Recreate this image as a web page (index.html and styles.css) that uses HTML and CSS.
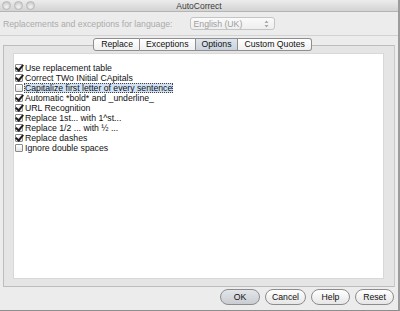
FILE: index.html
```html
<!DOCTYPE html>
<html>
<head>
  <meta charset="utf-8" />
  <title>AutoCorrect</title>
  <link rel="stylesheet" href="styles.css">
</head>
<body>

  <div class="window">
    <header class="titlebar">
      <div class="lights">
        <span class="light"></span>
        <span class="light"></span>
        <span class="light"></span>
      </div>
      <div class="title">AutoCorrect</div>
      <div></div>
    </header>

    <div class="lang">
      <span class="lang-label">Replacements and exceptions for language:</span>
      <div class="popup">
        <span>English (UK)</span>
        <svg class="arrows" width="5" height="8" viewBox="0 0 5 8">
          <path d="M0.5 3 L2.5 0.5 L4.5 3 Z M0.5 5 L2.5 7.5 L4.5 5 Z" fill="#a8a8a8" />
        </svg>
      </div>
    </div>

    <div class="tabview">
      <nav class="tabs">
        <span class="tab first">Replace</span>
        <span class="tab">Exceptions</span>
        <span class="tab selected">Options</span>
        <span class="tab last">Custom Quotes</span>
      </nav>
      <div class="pane">
        <ul class="list">
          <li class="item"><span class="box checked"></span><span class="label">Use replacement table</span></li>
          <li class="item"><span class="box checked"></span><span class="label">Correct TWo INitial CApitals</span></li>
          <li class="item"><span class="box"></span><span class="label focused">Capitalize first letter of every sentence</span></li>
          <li class="item"><span class="box checked"></span><span class="label">Automatic *bold* and _underline_</span></li>
          <li class="item"><span class="box checked"></span><span class="label">URL Recognition</span></li>
          <li class="item"><span class="box checked"></span><span class="label">Replace 1st... with 1^st...</span></li>
          <li class="item"><span class="box checked"></span><span class="label">Replace 1/2 ... with ½ ...</span></li>
          <li class="item"><span class="box checked"></span><span class="label">Replace dashes</span></li>
          <li class="item"><span class="box"></span><span class="label">Ignore double spaces</span></li>
        </ul>
      </div>
    </div>

    <footer class="buttons">
      <button class="btn default">OK</button>
      <button class="btn">Cancel</button>
      <button class="btn">Help</button>
      <button class="btn">Reset</button>
    </footer>
  </div>

</body>
</html>
```

FILE: styles.css
```css
* {
  box-sizing: border-box;
}
html, body {
  margin: 0;
  padding: 0;
}
ul {
  margin: 0;
  padding: 0;
  list-style: none;
}
button {
  font: inherit;
  margin: 0;
}

/* window */
body {
  font: 8.7px/10px 'Liberation Sans', Arial, sans-serif;
  color: #111;
  background: #ececec;
}
.window {
  display: flex;
  flex-direction: column;
  width: 400px;
  height: 311px;
  overflow: hidden;
  background: #ececec;
  border-right: 2px solid #9c9c9c;
  border-bottom: 1px solid #8e8e8e;
}

.titlebar {
  display: grid;
  grid-template-columns: 1fr auto 1fr;
  align-items: center;
  height: 12px;
  background: linear-gradient(#ececec, #d3d3d3);
  border-bottom: 1px solid #b4b4b4;
}
.lights {
  display: flex;
  gap: 3px;
  padding-left: 2px;
}
.light {
  width: 9px;
  height: 9px;
  border-radius: 50%;
  border: 1px solid #b8b8b8;
  background: radial-gradient(circle at 50% 70%, #f4f4f4, #cfcfcf 70%);
}
.title {
  font-size: 8.5px;
  color: #3a3a3a;
}

.lang {
  display: flex;
  align-items: center;
  height: 24px;
  padding-left: 3px;
  border-bottom: 1px solid #d2d2d2;
}
.lang-label {
  color: #ababab;
}
.popup {
  display: flex;
  align-items: center;
  justify-content: space-between;
  width: 85px;
  height: 13px;
  margin-left: 17px;
  padding: 0 5px 0 3px;
  color: #9e9e9e;
  background: linear-gradient(#fafafa, #eeeeee);
  border: 1px solid #c4c4c4;
  border-radius: 3px;
}

/* tabs */
.tabview {
  display: flex;
  flex-direction: column;
  flex: 1;
  margin-top: 2px;
}
.tabs {
  position: relative;
  z-index: 1;
  display: flex;
  justify-content: center;
  height: 13px;
  padding-left: 7px;
}
.tab {
  padding: 0 6px;
  line-height: 11px;
  background: linear-gradient(#ffffff, #f0f0f0);
  border: 1px solid #8e8e8e;
  border-left: none;
}
.tab.first {
  border-left: 1px solid #8e8e8e;
  border-radius: 3px 0 0 3px;
  padding-left: 7px;
}
.tab.last {
  border-radius: 0 3px 3px 0;
}
.tab.selected {
  background: linear-gradient(#dfe5ec, #c9d2dc);
}

.pane {
  flex: 1;
  display: flex;
  margin: -6px 3px 0;
  padding: 7px 10px 7px 9px;
  background: #e5e5e5;
  border: 1px solid #bdbdbd;
  border-right-color: #cacaca;
}
.list {
  flex: 1;
  padding: 9px 1px;
  background: #fff;
  border: 1px solid #d8d8d8;
}
.item {
  display: flex;
  align-items: center;
  height: 10px;
}
.box {
  position: relative;
  width: 8px;
  height: 8px;
  margin-right: 1px;
  border: 1px solid #8a8a8a;
  border-radius: 1px;
  background: linear-gradient(#ffffff, #e4e4e4);
}
.box.checked::after {
  content: "";
  position: absolute;
  left: 1px;
  top: -2px;
  width: 3px;
  height: 6px;
  border: solid #1e1e1e;
  border-width: 0 2px 2px 0;
  transform: rotate(40deg);
}
.label {
  padding: 0 1px;
  white-space: nowrap;
}
.label.focused {
  background: #d2e2f5;
  outline: 1px dotted #444;
  outline-offset: -1px;
}

/* buttons */
.buttons {
  display: flex;
  justify-content: flex-end;
  gap: 5px;
  padding: 2px 4px 5px;
}
.btn {
  min-width: 39px;
  height: 16px;
  padding: 0 6px;
  color: #111;
  background: linear-gradient(#ffffff, #e6e6e6);
  border: 1px solid #8c8c8c;
  border-radius: 8px;
}
.btn.default {
  min-width: 40px;
  background: linear-gradient(#e2e5e9, #c9cdd2);
}
```
